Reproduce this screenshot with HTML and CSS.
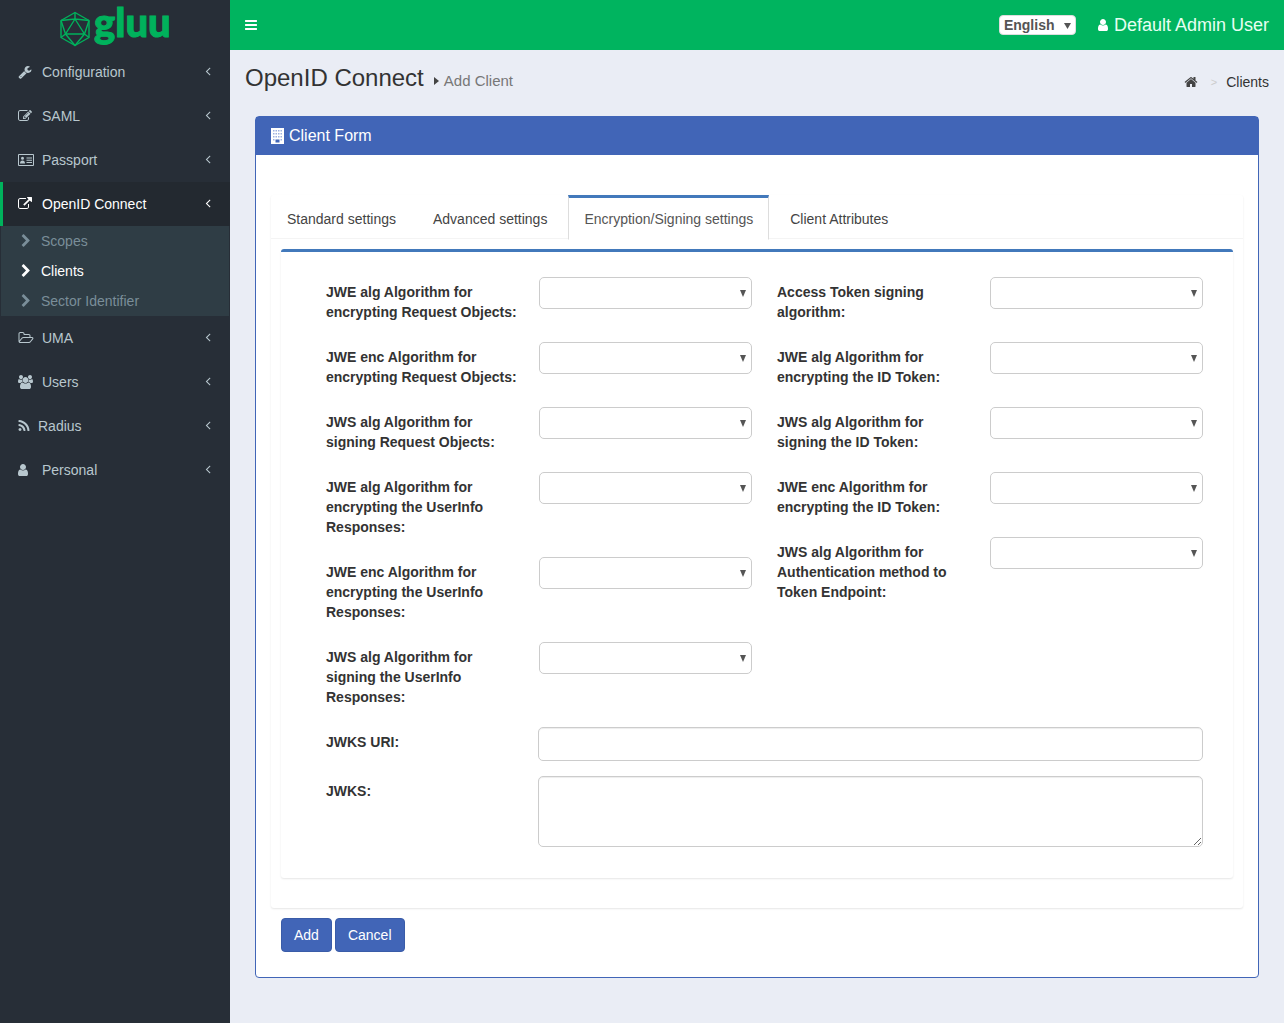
FILE: index.html
```html
<!DOCTYPE html>
<html lang="en">
<head>
    <meta charset="UTF-8">
    <title>OpenID Connect - Add Client</title>
    <link rel="stylesheet" href="styles.css">
</head>
<body>
    <svg class="sprite" xmlns="http://www.w3.org/2000/svg">
        <symbol id="i-wrench" viewBox="0 0 1792 1792" preserveAspectRatio="xMinYMid"><path d="M448 1472q0-26-19-45t-45-19-45 19-19 45 19 45 45 19 45-19 19-45zm644-420l-682 682q-37 37-90 37-52 0-91-37l-106-108q-38-36-38-90 0-53 38-91l681-681q39 98 114.5 173.5t173.5 114.5zm634-435q0 39-23 106-47 134-164.5 217.5t-258.5 83.5q-185 0-316.5-131.5t-131.5-316.5 131.5-316.5 316.5-131.5q58 0 121.5 16.5t107.5 46.5q16 11 16 28t-16 28l-293 169v224l193 107q5-3 79-48.5t135.5-81 70.5-35.5q15 0 23.5 10t8.5 25z"/></symbol>
        <symbol id="i-edit" viewBox="0 0 1792 1792" preserveAspectRatio="xMinYMid"><path d="M888 1184l116-116-152-152-116 116v56h96v96h56zm440-720q-16-16-33 1l-350 350q-17 17-1 33t33-1l350-350q17-17 1-33zm80 594v190q0 119-84.5 203.5t-203.5 84.5h-832q-119 0-203.5-84.5t-84.5-203.5v-832q0-119 84.5-203.5t203.5-84.5h832q63 0 117 25 15 7 18 23 3 17-9 29l-49 49q-14 14-32 8-23-6-45-6h-832q-66 0-113 47t-47 113v832q0 66 47 113t113 47h832q66 0 113-47t47-113v-126q0-13 9-22l64-64q15-15 35-7t20 29zm-96-738l288 288-672 672h-288v-288zm444 132l-92 92-288-288 92-92q28-28 68-28t68 28l152 152q28 28 28 68t-28 68z"/></symbol>
        <symbol id="i-card" viewBox="0 0 16 12"><path fill-rule="evenodd" d="M1 0h14a1 1 0 0 1 1 1v10a1 1 0 0 1-1 1H1a1 1 0 0 1-1-1V1a1 1 0 0 1 1-1zm0 1v10h14V1zm3.500 1.700a1.500 1.500 0 1 1 0 3 1.500 1.500 0 0 1 0-3zM2 9.500c0-2 1-3 2.500-3s2.500 1 2.500 3zM8.500 3.500H14v1H8.500zm0 2.200H14v1H8.500zm0 2.200H14v1H8.500z"/></symbol>
        <symbol id="i-link" viewBox="0 0 1792 1792" preserveAspectRatio="xMinYMid"><path d="M1408 928v320q0 119-84.5 203.5t-203.5 84.5h-832q-119 0-203.5-84.5t-84.5-203.500v-832q0-119 84.5-203.5t203.5-84.5h704q14 0 23 9t9 23v64q0 14-9 23t-23 9h-704q-66 0-113 47t-47 113v832q0 66 47 113t113 47h832q66 0 113-47t47-113v-320q0-14 9-23t23-9h64q14 0 23 9t9 23zm384-864v512q0 26-19 45t-45 19-45-19l-176-176-652 652q-10 10-23 10t-23-10l-114-114q-10-10-10-23t10-23l652-652-176-176q-19-19-19-45t19-45 45-19h512q26 0 45 19t19 45z"/></symbol>
        <symbol id="i-folder" viewBox="0 0 1920 1792" preserveAspectRatio="xMinYMid"><path d="M1845 931q0-35-53-35h-1088q-40 0-85.5 21.5t-71.5 52.5l-294 363q-18 24-18 40 0 35 53 35h1088q40 0 86-22t71-53l294-363q18-22 18-39zm-1141-163h768v-160q0-40-28-68t-68-28h-576q-40 0-68-28t-28-68v-64q0-40-28-68t-68-28h-320q-40 0-68 28t-28 68v853l256-315q44-53 116-87.5t140-34.5zm1269 163q0 62-46 120l-295 363q-43 53-116 87.5t-140 34.5h-1088q-92 0-158-66t-66-158v-960q0-92 66-158t158-66h320q92 0 158 66t66 158v32h544q92 0 158 66t66 158v160h192q54 0 99 24.5t67 70.5q15 32 15 68z"/></symbol>
        <symbol id="i-users" viewBox="0 0 1920 1792" preserveAspectRatio="xMinYMid"><path d="M593 896q-162 5-265 128h-134q-82 0-138-40.500t-56-118.500q0-353 124-353 6 0 43.500 21t97.500 42.500 119 21.500q67 0 133-23-5 37-5 66 0 139 81 256zm1071 637q0 120-73 189.500t-194 69.500h-874q-121 0-194-69.500t-73-189.500q0-53 3.500-103.500t14-109 26.500-108.500 43-97.500 62-81 85.500-53.500 111.500-20q10 0 43 21.500t73 48 107 48 135 21.500 135-21.500 107-48 73-48 43-21.500q61 0 111.500 20t85.500 53.500 62 81 43 97.500 26.500 108.500 14 109 3.500 103.500zm-1024-1277q0 106-75 181t-181 75-181-75-75-181 75-181 181-75 181 75 75 181zm704 384q0 159-112.500 271.500t-271.500 112.500-271.500-112.500-112.500-271.500 112.500-271.500 271.500-112.500 271.500 112.500 112.500 271.500zm576 225q0 78-56 118.500t-138 40.500h-134q-103-123-265-128 81-117 81-256 0-29-5-66 66 23 133 23 59 0 119-21.500t97.500-42.500 43.500-21q124 0 124 353zm-128-609q0 106-75 181t-181 75-181-75-75-181 75-181 181-75 181 75 75 181z"/></symbol>
        <symbol id="i-rss" viewBox="0 0 1792 1792" preserveAspectRatio="xMinYMid"><path d="M576 1344q0 80-56 136t-136 56-136-56-56-136 56-136 136-56 136 56 56 136zm512 123q2 28-17 48-18 21-47 21h-135q-25 0-43-16.500t-20-41.500q-22-229-184.500-391.500t-391.500-184.500q-25-2-41.500-20t-16.500-43v-135q0-29 21-47 17-17 43-17h5q160 13 306 80.500t259 181.500q114 113 181.500 259t80.500 306zm512 2q2 27-18 47-18 20-46 20h-143q-26 0-44.500-17.500t-19.500-42.500q-12-215-101-408.500t-231.500-336-336-231.500-408.500-102q-25-1-42.500-19.500t-17.500-43.500v-143q0-28 20-46 18-18 44-18h3q262 13 501.500 120t425.500 294q187 186 294 425.500t120 501.500z"/></symbol>
        <symbol id="i-user" viewBox="0 0 1792 1792" preserveAspectRatio="xMinYMid"><path d="M1536 1399q0 109-62.500 187t-150.500 78h-854q-88 0-150.500-78t-62.500-187q0-85 8.500-160.500t31.500-152 58.500-131 94-89 134.500-34.500q131 128 313 128t313-128q76 0 134.500 34.500t94 89 58.500 131 31.500 152 8.500 160.500zm-256-887q0 159-112.500 271.500t-271.500 112.500-271.500-112.500-112.500-271.500 112.500-271.500 271.500-112.500 271.500 112.500 112.500 271.500z"/></symbol>
        <symbol id="i-left" viewBox="0 0 1792 1792"><path d="M1203 544q0 13-10 23l-393 393 393 393q10 10 10 23t-10 23l-50 50q-10 10-23 10t-23-10l-466-466q-10-10-10-23t10-23l466-466q10-10 23-10t23 10l50 50q10 10 10 23z"/></symbol>
        <symbol id="i-chevron" viewBox="0 0 1792 1792"><path d="M1363 877l-742 742q-19 19-45 19t-45-19l-166-166q-19-19-19-45t19-45l531-531-531-531q-19-19-19-45t19-45l166-166q19-19 45-19t45 19l742 742q19 19 19 45t-19 45z"/></symbol>
        <symbol id="i-bars" viewBox="0 0 1792 1792"><path d="M1664 1344v128q0 26-19 45t-45 19h-1408q-26 0-45-19t-19-45v-128q0-26 19-45t45-19h1408q26 0 45 19t19 45zm0-512v128q0 26-19 45t-45 19h-1408q-26 0-45-19t-19-45v-128q0-26 19-45t45-19h1408q26 0 45 19t19 45zm0-512v128q0 26-19 45t-45 19h-1408q-26 0-45-19t-19-45v-128q0-26 19-45t45-19h1408q26 0 45 19t19 45z"/></symbol>
        <symbol id="i-home" viewBox="0 0 1792 1792"><path d="M1472 992v480q0 26-19 45t-45 19h-384v-384h-256v384h-384q-26 0-45-19t-19-45v-480q0-1 .5-3t.5-3l575-474 575 474q1 2 1 6zm223-69l-62 74q-8 9-21 11h-3q-13 0-21-7l-692-577-692 577q-12 8-24 7-13-2-21-11l-62-74q-8-10-7-23.500t11-21.500l719-599q32-26 76-26t76 26l244 204v-195q0-14 9-23t23-9h192q14 0 23 9t9 23v408l219 182q10 8 11 21.500t-7 23.500z"/></symbol>
    </svg>

    <div class="wrapper">
        <aside class="sidebar">
            <div class="logo">
                <svg class="logo-mark" viewBox="0 0 32 36" fill="none" stroke="#00b25c" stroke-width="1.400" stroke-linejoin="round">
                    <path d="M16 1.500 30 9.500V26.500L16 34.500 2 26.500V9.500Z"/>
                    <path d="M16 8 25.500 23H6.500Z"/>
                    <path d="M16 1.500V8M2 9.500 16 8 30 9.500M2 9.500 6.500 23 2 26.500M30 9.500 25.500 23 30 26.500M6.500 23 16 34.500 25.500 23"/>
                </svg>
                <span class="logo-text">gluu</span>
            </div>
            <ul class="menu">
                <li class="menu-item"><svg class="ico"><use href="#i-wrench"/></svg><span class="menu-label">Configuration</span><svg class="angle"><use href="#i-left"/></svg></li>
                <li class="menu-item"><svg class="ico"><use href="#i-edit"/></svg><span class="menu-label">SAML</span><svg class="angle"><use href="#i-left"/></svg></li>
                <li class="menu-item"><svg class="ico"><use href="#i-card"/></svg><span class="menu-label">Passport</span><svg class="angle"><use href="#i-left"/></svg></li>
                <li class="menu-item active"><svg class="ico"><use href="#i-link"/></svg><span class="menu-label">OpenID Connect</span><svg class="angle"><use href="#i-left"/></svg></li>
                <li>
                    <ul class="submenu">
                        <li class="sub-item"><svg class="sub-ico"><use href="#i-chevron"/></svg>Scopes</li>
                        <li class="sub-item current"><svg class="sub-ico"><use href="#i-chevron"/></svg>Clients</li>
                        <li class="sub-item"><svg class="sub-ico"><use href="#i-chevron"/></svg>Sector Identifier</li>
                    </ul>
                </li>
                <li class="menu-item"><svg class="ico"><use href="#i-folder"/></svg><span class="menu-label">UMA</span><svg class="angle"><use href="#i-left"/></svg></li>
                <li class="menu-item"><svg class="ico"><use href="#i-users"/></svg><span class="menu-label">Users</span><svg class="angle"><use href="#i-left"/></svg></li>
                <li class="menu-item"><svg class="ico ico-rss"><use href="#i-rss"/></svg><span class="menu-label">Radius</span><svg class="angle"><use href="#i-left"/></svg></li>
                <li class="menu-item"><svg class="ico ico-user"><use href="#i-user"/></svg><span class="menu-label">Personal</span><svg class="angle"><use href="#i-left"/></svg></li>
            </ul>
        </aside>

        <div class="main">
            <header class="topbar">
                <svg class="bars"><use href="#i-bars"/></svg>
                <div class="topbar-right">
                    <select class="lang"><option>English</option></select>
                    <span class="account"><svg class="account-ico"><use href="#i-user"/></svg>Default Admin User</span>
                </div>
            </header>

            <div class="content-header">
                <h1>OpenID Connect</h1>
                <span class="caret"></span>
                <small>Add Client</small>
                <div class="breadcrumb">
                    <svg class="home"><use href="#i-home"/></svg>
                    <span class="crumb-sep">&gt;</span>
                    <span>Clients</span>
                </div>
            </div>

            <section class="panel">
                <div class="panel-heading">
                    <svg class="building" viewBox="0 0 13 16">
                        <rect width="13" height="16" fill="#fff"/>
                        <g fill="#9db1e0">
                            <rect x="2" y="2" width="1.500" height="1.500"/><rect x="4.500" y="2" width="1.500" height="1.500"/><rect x="7" y="2" width="1.500" height="1.500"/><rect x="9.500" y="2" width="1.500" height="1.500"/>
                            <rect x="2" y="5" width="1.500" height="1.500"/><rect x="4.500" y="5" width="1.500" height="1.500"/><rect x="7" y="5" width="1.500" height="1.500"/><rect x="9.500" y="5" width="1.500" height="1.500"/>
                            <rect x="2" y="8" width="1.500" height="1.500"/><rect x="4.500" y="8" width="1.500" height="1.500"/><rect x="7" y="8" width="1.500" height="1.500"/><rect x="9.500" y="8" width="1.500" height="1.500"/>
                            <rect x="2" y="11" width="1.500" height="1.500"/><rect x="9.500" y="11" width="1.500" height="1.500"/>
                        </g>
                        <rect x="4.500" y="11.500" width="4" height="3" fill="#4165b7"/>
                    </svg>
                    Client Form
                </div>
                <div class="panel-body">
                    <div class="tabs-box">
                        <ul class="tabs">
                            <li class="tab">Standard settings</li>
                            <li class="tab">Advanced settings</li>
                            <li class="tab active">Encryption/Signing settings</li>
                            <li class="tab">Client Attributes</li>
                        </ul>
                        <div class="tab-pane">
                            <div class="columns">
                                <div class="column">
                                    <div class="field"><label>JWE alg Algorithm for encrypting Request Objects:</label><select></select></div>
                                    <div class="field"><label>JWE enc Algorithm for encrypting Request Objects:</label><select></select></div>
                                    <div class="field"><label>JWS alg Algorithm for signing Request Objects:</label><select></select></div>
                                    <div class="field"><label>JWE alg Algorithm for encrypting the UserInfo Responses:</label><select></select></div>
                                    <div class="field"><label>JWE enc Algorithm for encrypting the UserInfo Responses:</label><select></select></div>
                                    <div class="field"><label>JWS alg Algorithm for signing the UserInfo Responses:</label><select></select></div>
                                </div>
                                <div class="column">
                                    <div class="field"><label>Access Token signing algorithm:</label><select></select></div>
                                    <div class="field"><label>JWE alg Algorithm for encrypting the ID Token:</label><select></select></div>
                                    <div class="field"><label>JWS alg Algorithm for signing the ID Token:</label><select></select></div>
                                    <div class="field"><label>JWE enc Algorithm for encrypting the ID Token:</label><select></select></div>
                                    <div class="field"><label>JWS alg Algorithm for Authentication method to Token Endpoint:</label><select></select></div>
                                </div>
                            </div>
                            <div class="wide-field"><label>JWKS URI:</label><input type="text"></div>
                            <div class="wide-field"><label>JWKS:</label><textarea></textarea></div>
                        </div>
                    </div>
                    <div class="actions">
                        <button class="btn">Add</button>
                        <button class="btn">Cancel</button>
                    </div>
                </div>
            </section>
        </div>
    </div>
</body>
</html>
```

FILE: styles.css
```css
* {
    box-sizing: border-box;
}
body {
    margin: 0;
    font-family: "Liberation Sans", Arial, sans-serif;
    font-size: 14px;
    line-height: 20px;
    color: #333;
    background-color: #eaedf5;
}
ul {
    list-style: none;
    margin: 0;
    padding: 0;
}
.sprite {
    position: absolute;
    width: 0;
    height: 0;
}
.wrapper {
    display: flex;
    min-height: 100vh;
}

/* sidebar */
.sidebar {
    width: 230px;
    flex-shrink: 0;
    background-color: #272e37;
}
.logo {
    height: 50px;
    display: flex;
    align-items: flex-start;
    padding-left: 59px;
}
.logo-mark {
    width: 32px;
    height: 36px;
    margin-top: 11px;
    flex-shrink: 0;
}
.logo-text {
    font-family: Lato, sans-serif;
    font-weight: 900;
    font-size: 40px;
    line-height: 44px;
    color: #00b25c;
    -webkit-text-stroke: 1px #00b25c;
    margin-left: 3px;
}
.menu-item {
    height: 44px;
    display: flex;
    align-items: center;
    padding-left: 18px;
    color: #b8c7ce;
}
.menu-item.active {
    background-color: #232930;
    border-left: 3px solid #00b25c;
    padding-left: 15px;
    color: #fff;
}
.ico {
    width: 16px;
    height: 14px;
    fill: currentColor;
    margin-right: 8px;
    flex-shrink: 0;
}
.ico-rss {
    width: 14px;
    margin: 0 7px 0 -1px;
}
.ico-user {
    width: 14px;
    margin: 0 12px 0 -2px;
}
.menu-label {
    flex: 1;
}
.angle {
    width: 14px;
    height: 14px;
    fill: currentColor;
    margin: 0 15px 2px 0;
}
.submenu {
    background-color: #2f3d45;
    margin: 0 1px;
}
.sub-item {
    height: 30px;
    display: flex;
    align-items: center;
    padding-left: 18px;
    color: #7a8e99;
}
.sub-item.current {
    color: #fff;
}
.sub-ico {
    width: 14px;
    height: 14px;
    fill: currentColor;
    margin-right: 8px;
}

/* top bar */
.main {
    flex: 1;
    min-width: 0;
}
.topbar {
    height: 50px;
    background-color: #00b45f;
    display: flex;
    align-items: center;
    justify-content: space-between;
    padding: 0 15px 0 14px;
}
.bars {
    width: 14px;
    height: 14px;
    fill: #fff;
}
.topbar-right {
    display: flex;
    align-items: center;
}
.lang {
    appearance: none;
    width: 77px;
    height: 20px;
    margin-right: 20px;
    padding: 0 0 0 4px;
    font-family: inherit;
    font-size: 14px;
    font-weight: bold;
    color: #555;
    background: #fff url("data:image/svg+xml,%3Csvg xmlns='http://www.w3.org/2000/svg' width='7' height='7'%3E%3Cpath d='M0 1h7L3.500 7z' fill='%23555'/%3E%3C/svg%3E") no-repeat 64px 6px;
    border: 1px solid #ddd;
    border-radius: 4px;
}
.account {
    display: flex;
    align-items: center;
    font-size: 18px;
    color: #e6fff2;
}
.account-ico {
    width: 14px;
    height: 14px;
    fill: #fff;
    margin-right: 4px;
}

/* page title */
.content-header {
    height: 66px;
    display: flex;
    align-items: center;
    padding: 0 15px 10px;
}
h1 {
    margin: 0;
    font-size: 24px;
    font-weight: normal;
    line-height: 28px;
    color: #333;
}
.caret {
    margin: 5px 5px 0 10px;
    border-left: 5px solid #444;
    border-top: 4px solid transparent;
    border-bottom: 4px solid transparent;
}
small {
    font-size: 15px;
    color: #777;
    margin-top: 6px;
}
.breadcrumb {
    margin-left: auto;
    margin-top: 8px;
    display: flex;
    align-items: center;
}
.home {
    width: 14px;
    height: 14px;
    fill: #444;
}
.crumb-sep {
    color: #ccc;
    font-size: 11px;
    margin: 0 9px 0 13px;
}

/* panel */
.panel {
    margin: 0 25px 45px;
    background-color: #fff;
    border: 1px solid #4165b7;
    border-radius: 4px;
}
.panel-heading {
    height: 38px;
    display: flex;
    align-items: center;
    padding-left: 15px;
    font-size: 16px;
    color: #fff;
    background-color: #4165b7;
}
.building {
    width: 13px;
    height: 16px;
    margin-right: 5px;
}
.panel-body {
    padding: 40px 15px 25px;
}
.tabs-box {
    background-color: #fff;
    border-radius: 3px;
    box-shadow: 0 1px 2px rgba(0, 0, 0, 0.1);
    padding-bottom: 30px;
}
.tabs {
    display: flex;
    height: 44px;
    border-bottom: 1px solid #f4f4f4;
}
.tab {
    height: 44px;
    padding: 11px 15px 0;
    margin-right: 5px;
    border: 1px solid transparent;
    border-top-width: 3px;
    color: #444;
}
.tab.active {
    height: 45px;
    background-color: #fff;
    border-color: #4279bb #ddd #fff;
    color: #555;
}
.tab-pane {
    margin: 10px 10px 0;
    padding: 25px 30px 31px 45px;
    border-top: 3px solid #4279bb;
    border-radius: 3px;
    box-shadow: 0 1px 2px rgba(0, 0, 0, 0.1);
}
.columns {
    display: flex;
    gap: 25px;
}
.column {
    width: 426px;
}
.field {
    display: grid;
    grid-template-columns: 213px 213px;
    align-items: start;
    margin-bottom: 20px;
}
label {
    display: block;
    padding: 5px 15px 0 0;
    font-weight: bold;
}
select {
    appearance: none;
    height: 32px;
    width: 100%;
    background: #fff url("data:image/svg+xml,%3Csvg xmlns='http://www.w3.org/2000/svg' width='6' height='7'%3E%3Cpath d='M0 0h6L3 7z' fill='%23555'/%3E%3C/svg%3E") no-repeat right 5px center;
    border: 1px solid #ccc;
    border-radius: 5px;
}
.wide-field {
    display: grid;
    grid-template-columns: 212px 1fr;
    align-items: start;
    margin-bottom: 15px;
}
.wide-field:last-child {
    margin-bottom: 0;
}
input,
textarea {
    display: block;
    width: 100%;
    height: 34px;
    padding: 6px 12px;
    border: 1px solid #ccc;
    border-radius: 5px;
    background-color: #fff;
    box-shadow: inset 0 1px 1px rgba(0, 0, 0, 0.075);
}
textarea {
    height: 71px;
}
.actions {
    display: flex;
    gap: 3px;
    padding: 10px 0 0 10px;
}
.btn {
    height: 34px;
    padding: 0 12px;
    font-family: inherit;
    font-size: 14px;
    color: #fff;
    background-color: #4165b7;
    border: 1px solid #3a5ca8;
    border-radius: 4px;
}
```
